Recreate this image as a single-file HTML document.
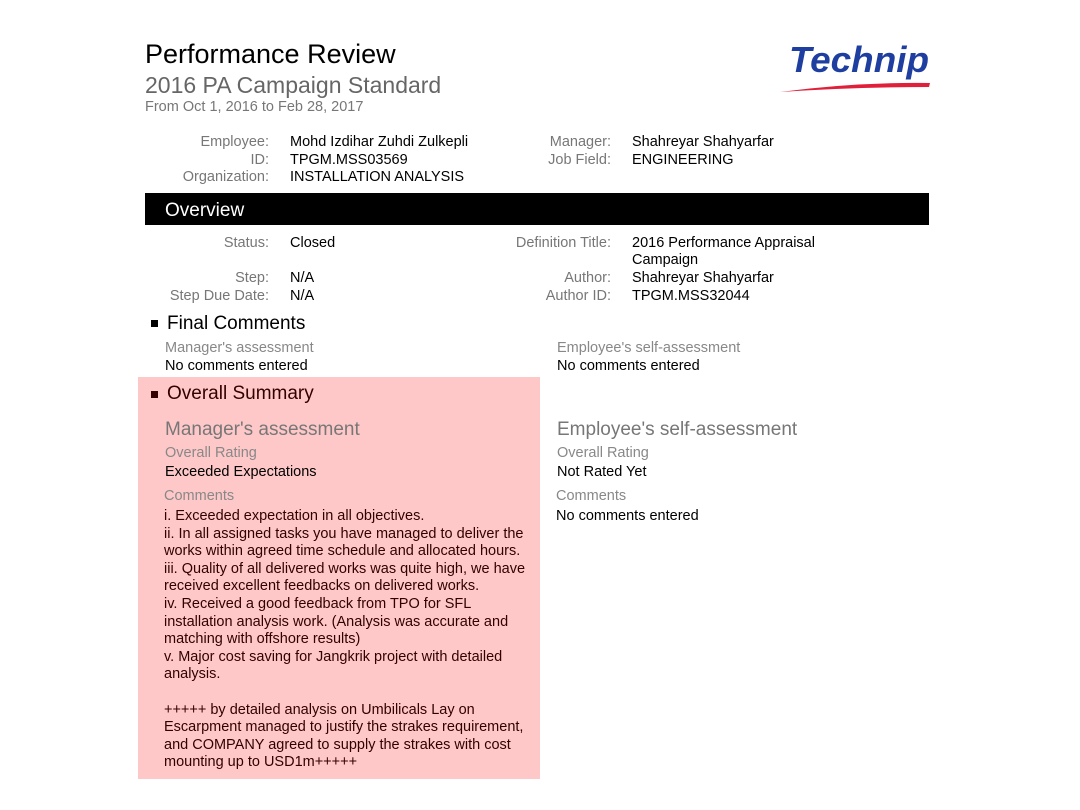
<!DOCTYPE html>
<html><head><meta charset="utf-8"><style>
body{margin:0;width:1080px;height:810px;background:#fff;font-family:"Liberation Sans",sans-serif;position:relative;overflow:hidden}
.a{position:absolute;white-space:nowrap;margin-top:2px}
.b{margin-top:0}
.l{color:#777;font-size:14.5px;text-align:right}
.v{color:#000;font-size:14.5px}
.g{color:#888}
</style></head><body>
<div class="a" style="left:145px;top:37px;font-size:27px;color:#000">Performance Review</div>
<div class="a" style="left:145px;top:70px;font-size:23px;color:#666">2016 PA Campaign Standard</div>
<div class="a" style="left:145px;top:97px;font-size:14.5px;color:#777">From Oct 1, 2016 to Feb 28, 2017</div>
<svg class="a b" style="left:775px;top:40px" width="160" height="55" viewBox="0 0 160 55">
<text x="14" y="32" font-family="Liberation Sans" font-weight="bold" font-style="italic" font-size="36" fill="#1f3fa0" textLength="140" lengthAdjust="spacingAndGlyphs">Technip</text>
<path d="M5 52 Q80 42 155 43 L154 47 Q80 47 5 52Z" fill="#e0203a"/>
</svg>

<div class="a l" style="right:811px;top:132px">Employee:</div><div class="a v" style="left:290px;top:132px">Mohd Izdihar Zuhdi Zulkepli</div>
<div class="a l" style="right:811px;top:150px">ID:</div><div class="a v" style="left:290px;top:150px">TPGM.MSS03569</div>
<div class="a l" style="right:811px;top:167px">Organization:</div><div class="a v" style="left:290px;top:167px">INSTALLATION ANALYSIS</div>
<div class="a l" style="right:469px;top:132px">Manager:</div><div class="a v" style="left:632px;top:132px">Shahreyar Shahyarfar</div>
<div class="a l" style="right:469px;top:150px">Job Field:</div><div class="a v" style="left:632px;top:150px">ENGINEERING</div>

<div class="a b" style="left:145px;top:193px;width:784px;height:32px;background:#000"></div>
<div class="a" style="left:165px;top:198px;font-size:19px;color:#fff">Overview</div>

<div class="a l" style="right:811px;top:233px">Status:</div><div class="a v" style="left:290px;top:233px">Closed</div>
<div class="a l" style="right:811px;top:268px">Step:</div><div class="a v" style="left:290px;top:268px">N/A</div>
<div class="a l" style="right:811px;top:286px">Step Due Date:</div><div class="a v" style="left:290px;top:286px">N/A</div>
<div class="a l" style="right:469px;top:233px">Definition Title:</div><div class="a v" style="left:632px;top:233px">2016 Performance Appraisal</div>
<div class="a v" style="left:632px;top:250px">Campaign</div>
<div class="a l" style="right:469px;top:268px">Author:</div><div class="a v" style="left:632px;top:268px">Shahreyar Shahyarfar</div>
<div class="a l" style="right:469px;top:286px">Author ID:</div><div class="a v" style="left:632px;top:286px">TPGM.MSS32044</div>

<div class="a b" style="left:151px;top:320px;width:7px;height:7px;background:#000"></div>
<div class="a" style="left:167px;top:311px;font-size:19px">Final Comments</div>
<div class="a v g" style="left:165px;top:338px">Manager's assessment</div>
<div class="a v" style="left:165px;top:356px">No comments entered</div>
<div class="a v g" style="left:557px;top:338px">Employee's self-assessment</div>
<div class="a v" style="left:557px;top:356px">No comments entered</div>

<div class="a b" style="left:138px;top:377px;width:402px;height:402px;background:#ffc8c8"></div>
<div class="a b" style="left:151px;top:391px;width:7px;height:7px;background:#300"></div>
<div class="a" style="left:167px;top:381px;font-size:19px;color:#300">Overall Summary</div>
<div class="a" style="left:165px;top:417px;font-size:19px;color:#777">Manager's assessment</div>
<div class="a v g" style="left:165px;top:443px">Overall Rating</div>
<div class="a v" style="left:165px;top:462px">Exceeded Expectations</div>
<div class="a v g" style="left:164px;top:486px">Comments</div>
<div class="a v" style="left:164px;top:506px;line-height:17.6px;color:#300">i. Exceeded expectation in all objectives.<br>ii. In all assigned tasks you have managed to deliver the<br>works within agreed time schedule and allocated hours.<br>iii. Quality of all delivered works was quite high, we have<br>received excellent feedbacks on delivered works.<br>iv. Received a good feedback from TPO for SFL<br>installation analysis work. (Analysis was accurate and<br>matching with offshore results)<br>v. Major cost saving for Jangkrik project with detailed<br>analysis.<br><br>+++++ by detailed analysis on Umbilicals Lay on<br>Escarpment managed to justify the strakes requirement,<br>and COMPANY agreed to supply the strakes with cost<br>mounting up to USD1m+++++</div>

<div class="a" style="left:557px;top:417px;font-size:19px;color:#777">Employee's self-assessment</div>
<div class="a v g" style="left:557px;top:443px">Overall Rating</div>
<div class="a v" style="left:557px;top:462px">Not Rated Yet</div>
<div class="a v g" style="left:556px;top:486px">Comments</div>
<div class="a v" style="left:556px;top:506px">No comments entered</div>
</body></html>
